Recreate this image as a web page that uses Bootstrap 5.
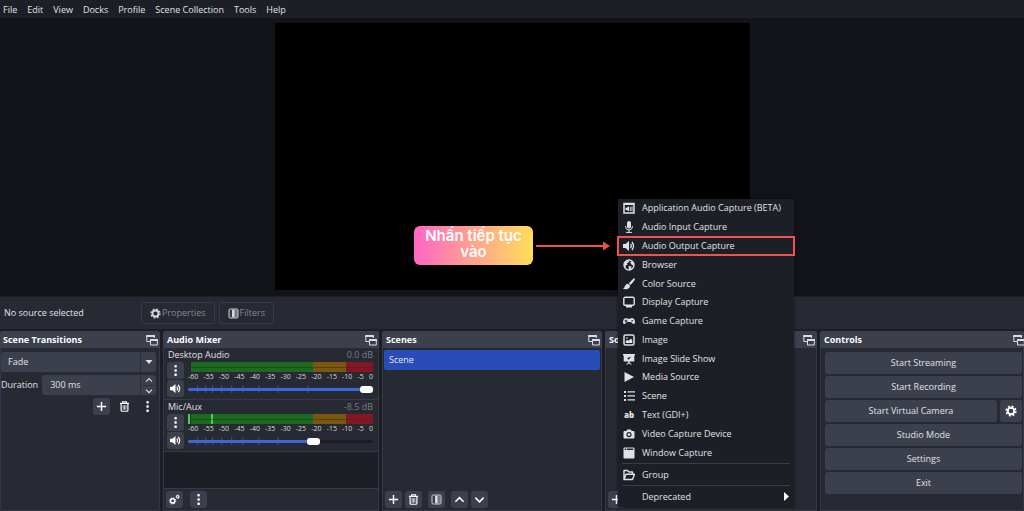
<!DOCTYPE html>
<html lang="en">
<head>
<meta charset="utf-8">
<meta name="viewport" content="width=device-width, initial-scale=1">
<title>OBS Studio</title>
<link href="https://cdn.jsdelivr.net/npm/bootstrap@5.3.0/dist/css/bootstrap.min.css" rel="stylesheet">
<style>
:root{--win:#1d1f26;--panel:#272a33;--raise:#3c404d;--line:#343744;--ink:#e0e1e5}
body{background:var(--win);color:var(--ink);font:9px/14px "Open Sans","Noto Sans",sans-serif;overflow:hidden}
svg{display:block;flex:none}
.ic{width:12px;height:12px;fill:currentColor}
button,input,select{font:inherit;color:inherit}
.menubar{height:18px;padding:1px 3px 0;gap:10px}
.menubar a{color:var(--ink);line-height:18px;text-decoration:none}
.stage{background:#131419;padding:5px 0 6px}
.screen{background:#000;width:475px;height:100%;margin-left:1px}
.tip{left:139px;top:203px;width:119px;height:39px;border:0;border-radius:6px;background:linear-gradient(90deg,#ff66c4,#ffde59);color:#fff;font:600 15px/16px Inter,sans-serif;padding:0 4px 3px}
.arrow{left:261px;top:217px}
.context{background:var(--panel);height:32px;padding:0 4px;margin-top:1px}
.context span{width:137px}
.ghost{height:22px;padding:0 8px;gap:1px;background:transparent;border:1px solid #373a47;border-radius:3px;color:#85878e}
.ghost .ic{color:#d5d6da;width:11px;height:11px}
.docks{display:grid;grid-template-columns:160fr 216fr 220fr 212fr 204fr;gap:3px;height:182px;padding-top:2px}
.dock{background:var(--panel);border:1px solid var(--line);border-radius:3px 3px 0 0;min-width:0}
.dock-head{background:var(--raise);height:17px;padding:0 3px 0 4px;margin:-1px -1px 0;border-radius:3px 3px 0 0}
.dock:first-child .dock-head{padding-left:3px}
.dock-head .ic{margin-right:-1px}
.dock h2{font-size:9px;font-weight:700;line-height:17px;margin:0;color:#fff}
.tool{width:17px;height:17px;padding:0;border:0;border-radius:3px;background:var(--raise);display:flex;align-items:center;justify-content:center;color:#fff;flex:none}
.tool .ic{width:11px;height:11px}
.plain{background:transparent}
.stack{display:flex;flex-direction:column;gap:3px;padding:4px 3px 0 0}
.field{background:var(--raise);border:0;border-radius:3px;height:20px;min-width:0}
select.field{appearance:none;padding:0 7px;width:100%}
.pick .cap{right:0;top:0;width:16px;height:20px;border-left:1px solid #2c2f39;pointer-events:none}
.spin{width:16px;border-left:1px solid #2c2f39}
.spin button{height:10px;width:15px;padding:0;border:0;background:transparent;display:flex;align-items:center;justify-content:center}
.spin button+button{border-top:1px solid #2c2f39}
.spin .ic{width:8px;height:8px}
.acts{gap:6px}
.strip{height:52px;padding:0 5px 0 3px;border-bottom:1px solid #363946}
.strip label{line-height:14px;padding-left:1px}
.db{color:#777a83;line-height:14px}
.side{width:17px;gap:1px}
.vu{height:10px;margin-left:3px;background:linear-gradient(90deg,#1a6b1f 67%,#7a560f 67% 85%,#861526 85%);position:relative}
.vu::after{content:"";position:absolute;left:0;right:0;top:5px;height:1px;background:#27301f80}
.live::before{content:"";position:absolute;left:-3px;top:0;bottom:0;width:25px;background:linear-gradient(90deg,#35dc45 2px,transparent 2px 23px,#35dc45 23px)}
.scale{font-size:7px;line-height:9px;color:#d8d9dc}
.fader{height:17px}
.fader svg{left:0;top:4px;width:100%;height:8px}
.fader input{appearance:none;-webkit-appearance:none;width:100%;height:17px;margin:0;background:transparent;display:block;position:relative}
.fader input::-webkit-slider-runnable-track{height:3px;border-radius:2px;background:linear-gradient(90deg,#3d66d8 var(--v),#1b1d24 var(--v))}
.fader input::-webkit-slider-thumb{-webkit-appearance:none;width:13px;height:7px;margin-top:-2px;border-radius:3px;background:#fff}
.empty{background:var(--win);border-bottom:1px solid #363946}
.foot{height:21px;padding:0 2px;gap:3px;align-items:center}
.foot.wide{gap:7px}
.foot .gapped{margin-right:3px}
.picked{background:#284cb8;border:0;border-radius:2px;height:20px;margin:2px 1px;padding:0 5px;line-height:20px;color:#e6e8f2}
.controls{display:grid;gap:2px;padding:4px 1px 0 4px}
.ctl{background:var(--raise);border:0;border-radius:3px;height:22px;padding:0;color:var(--ink)}
.cog{width:22px;margin-left:3px;display:flex;align-items:center;justify-content:center;color:#fff}
.popup{left:12px;bottom:3px;width:176px;background:var(--win);box-shadow:0 0 3px #0008;z-index:5}
.sources{height:263px;margin-bottom:1px}
.popup a{color:var(--ink);text-decoration:none;display:flex;align-items:center;gap:7px;padding:0 5px;flex:1 1 0;min-height:0;white-space:nowrap}
.popup hr{margin:0 4px;opacity:1;border-color:#3a3d48}
.popup .hot{outline:2px solid #f0524f;outline-offset:-1px}
.abc{font:800 8px/12px "Open Sans",sans-serif;text-align:center}
.popup .last{height:21px}
</style>
</head>
<body class="vh-100 d-flex flex-column">
<svg width="0" height="0" class="position-absolute" aria-hidden="true">
<symbol id="gear" viewBox="0 0 12 12"><circle cx="6" cy="6" r="3.3" fill="none" stroke="currentColor" stroke-width="2"/><circle cx="6" cy="6" r="4.9" fill="none" stroke="currentColor" stroke-width="1.4" stroke-dasharray="2 1.85"/></symbol>
<symbol id="filter" viewBox="0 0 12 12"><rect x="1" y="1" width="10" height="10" rx="1.5" fill="#777a83" stroke="#c4c6cb"/><path d="M2 2h3v8H2z" fill="#3a3d47"/><path d="M4.500 2h2.500v8H4.500z" fill="#e4e5e8"/></symbol>
<symbol id="float" viewBox="0 0 12 12"><path d="M5 7.5H.8v-6h7.500V4" fill="none" stroke="#dcdde0"/><path d="M.3 1h8.500v2H.3z" fill="#dcdde0"/><path d="M4.500 5.500h6.800v5.500H4.500z" fill="#3c404d" stroke="#dcdde0"/><path d="M4 5h7.800v2H4z" fill="#dcdde0"/></symbol>
<symbol id="dots" viewBox="0 0 12 12"><rect x="4.800" y="0" width="2.600" height="2.800" rx=".8"/><rect x="4.800" y="4.600" width="2.600" height="2.800" rx=".8"/><rect x="4.800" y="9.200" width="2.600" height="2.800" rx=".8"/></symbol>
<symbol id="plus" viewBox="0 0 12 12"><path d="M6 1v10M1 6h10" stroke="currentColor" stroke-width="1.600"/></symbol>
<symbol id="trash" viewBox="0 0 12 12"><path d="M1 2.500h10M4 2V.8h4V2M2.300 3v7.200q0 1 1 1h5.400q1 0 1-1V3" fill="none" stroke="currentColor" stroke-width="1.300"/><path d="M4.500 4.500v5M6 4.500v5M7.500 4.500v5" stroke="currentColor" stroke-width=".8"/></symbol>
<symbol id="up" viewBox="0 0 12 12"><path d="M1.500 8.500L6 4l4.500 4.500" fill="none" stroke="currentColor" stroke-width="1.700"/></symbol>
<symbol id="down" viewBox="0 0 12 12"><path d="M1.500 4L6 8.500 10.500 4" fill="none" stroke="currentColor" stroke-width="1.700"/></symbol>
<symbol id="caret" viewBox="0 0 12 12"><path d="M2.500 4h7L6 8z"/></symbol>
<symbol id="sound" viewBox="0 0 12 12"><path d="M0 4h2.500L6 1v10L2.500 8H0z"/><path d="M7.500 4q1.500 2 0 4M9 2q3 4 0 8" fill="none" stroke="currentColor" stroke-width="1.300"/></symbol>
<symbol id="gears" viewBox="0 0 12 12"><circle cx="4" cy="7.500" r="2.300" fill="none" stroke="currentColor" stroke-width="1.600"/><circle cx="4" cy="7.500" r="3.400" fill="none" stroke="currentColor" stroke-dasharray="1.300 1.370"/><circle cx="9.500" cy="3" r="1.300" fill="none" stroke="currentColor" stroke-width="1.100"/><circle cx="9.500" cy="3" r="2.100" fill="none" stroke="currentColor" stroke-width=".6" stroke-dasharray=".8 .85"/></symbol>
<symbol id="app" viewBox="0 0 12 12"><path d="M1 1.500h10v9.500H1z" fill="none" stroke="currentColor" stroke-width="1.500"/><path d="M1 1h10v2H1zM2.500 5.700h1.300L6 4v5.500L3.800 8H2.500z"/><path d="M7.300 5v4M9 4.300v5" stroke="currentColor" stroke-width="1"/></symbol>
<symbol id="mic" viewBox="0 0 12 12"><rect x="4" y="0" width="4" height="7.500" rx="2"/><path d="M2.500 5q0 4 3.500 4t3.500-4M6 9v2.500M3 11.400h6" fill="none" stroke="currentColor"/></symbol>
<symbol id="globe" viewBox="0 0 12 12"><circle cx="6" cy="6" r="5" fill="none" stroke="currentColor" stroke-width="1.400"/><path d="M1.500 4Q3 1 6.500 1.200L6 3 4 4.200 4.500 6 3 6 2.500 8.500 1 7zM7 3l3-.5 1 3-1 1-1.500-1zM5.500 7l3 .5-.5 3-2 .7z"/></symbol>
<symbol id="brush" viewBox="0 0 12 12"><path d="M11.800.3q.5.800-1 3L7.500 7 5.800 5.200 9.500 1.500q1.500-1.400 2.300-1.200zM5.200 5.800L7 7.600Q7 11 3.500 11.200 1.500 11.500 0 10.200q1.700-.4 2-2.200.8-2.200 3.200-2.200z"/></symbol>
<symbol id="monitor" viewBox="0 0 12 12"><rect x=".8" y="1.300" width="10.400" height="8" rx="1.300" fill="none" stroke="currentColor" stroke-width="1.400"/><path d="M3 10h6v1.500H3z"/></symbol>
<symbol id="pad" viewBox="0 0 12 12"><path fill-rule="evenodd" d="M3 3q1 0 1.500.8h3Q8 3 9 3q3 .3 3 4.500Q11.800 9 10.500 9 9 8.700 8 7H4Q3 8.700 1.500 9 .2 9 0 7.500 0 3.300 3 3zM2.500 4.500v1h-1v1h1v1h1v-1h1v-1h-1v-1zM8.500 5v1.500h1.300V5z"/></symbol>
<symbol id="image" viewBox="0 0 12 12"><rect x="1" y="1" width="10" height="10" rx="1.500" fill="none" stroke="currentColor" stroke-width="1.500"/><path d="M2.700 9V7.300l1.500-1.500 1.300 1L8 4.500l1.300 2V9z"/><circle cx="4" cy="4" r=".8"/></symbol>
<symbol id="slides" viewBox="0 0 12 12"><path fill-rule="evenodd" d="M0 1h12v1.500h-.7V8.500H6.700v1l2.300 2H7.500L6 10.300 4.500 11.500H3l2.300-2v-1H.7v-6H0zM4 5l1.500 1.800L8.500 3.500 6 4.500z"/></symbol>
<symbol id="play" viewBox="0 0 12 12"><path d="M1.500 1L11 6l-9.500 5z"/></symbol>
<symbol id="list" viewBox="0 0 12 12"><path d="M1 1h2v2H1zM1 5h2v2H1zM1 9h2v2H1zM4.500 1.300H12v1.300H4.500zM4.500 5.300H12v1.300H4.500zM4.500 9.300H12v1.300H4.500z"/></symbol>
<symbol id="camera" viewBox="0 0 12 12"><path fill-rule="evenodd" d="M1.500 3H3.300L4.300 1.500h3.400L8.700 3h1.800q1 0 1 1v5.500q0 1-1 1h-9q-1 0-1-1V4q0-1 1-1zM6 4a2.600 2.600 0 100 5.200A2.600 2.600 0 006 4z"/><circle cx="6" cy="6.600" r="1.400"/></symbol>
<symbol id="window" viewBox="0 0 12 12"><path fill-rule="evenodd" d="M.5 1.500q0-1 1-1h9q1 0 1 1v9q0 1-1 1h-9q-1 0-1-1zM1.700 1.600v1.400h1.300V1.600zM3.800 1.600v1.400h6.500V1.600z"/></symbol>
<symbol id="folder" viewBox="0 0 12 12"><path d="M1 10.500V1.500h3.500L6 3h3.500v2M1 10.500L3 5.300h8.500l-2 5.200z" fill="none" stroke="currentColor" stroke-width="1.400" stroke-linejoin="round"/></symbol>
<symbol id="marks" viewBox="0 0 184 8" preserveAspectRatio="none"><path d="M9.500 0v8M17.500 0v8M24.500 0v8M33.500 0v8M43.500 0v8M54.500 0v8M70.500 0v8M89.500 0v8M119.500 0v8" stroke="#50535f"/></symbol>
</svg>

<nav class="menubar d-flex align-items-center">
<a href="#">File</a><a href="#">Edit</a><a href="#">View</a><a href="#">Docks</a><a href="#">Profile</a><a href="#">Scene Collection</a><a href="#">Tools</a><a href="#">Help</a>
</nav>

<main class="stage flex-grow-1 d-flex justify-content-center">
<div class="screen position-relative">
<button class="tip position-absolute">Nhấn tiếp tục vào</button>
<svg class="arrow position-absolute" width="74" height="12" viewBox="0 0 74 12" fill="#f0524f"><path d="M0 5h68v2H0zM67 1.500L74 6l-7 4.500z"/></svg>
</div>
</main>

<div class="context d-flex align-items-center">
<span>No source selected</span>
<button class="ghost d-flex align-items-center me-1"><svg class="ic"><use href="#gear"/></svg>Properties</button>
<button class="ghost d-flex align-items-center"><svg class="ic"><use href="#filter"/></svg>Filters</button>
</div>

<div class="docks">
<section class="dock">
<div class="dock-head d-flex justify-content-between align-items-center"><h2>Scene Transitions</h2><svg class="ic"><use href="#float"/></svg></div>
<div class="stack">
<div class="pick position-relative">
<select class="field" aria-label="Transition"><option>Fade</option></select>
<span class="cap position-absolute d-flex align-items-center justify-content-center"><svg class="ic"><use href="#caret"/></svg></span>
</div>
<div class="d-flex align-items-center gap-1">
<label for="dur">Duration</label>
<div class="field d-flex flex-grow-1">
<input id="dur" class="bg-transparent border-0 flex-grow-1 w-50 ps-2" value="300 ms">
<div class="spin"><button aria-label="Increase"><svg class="ic"><use href="#up"/></svg></button><button aria-label="Decrease"><svg class="ic"><use href="#down"/></svg></button></div>
</div>
</div>
<div class="acts d-flex justify-content-end"><button class="tool" aria-label="Add"><svg class="ic"><use href="#plus"/></svg></button><button class="tool plain" aria-label="Remove"><svg class="ic"><use href="#trash"/></svg></button><button class="tool plain" aria-label="More"><svg class="ic"><use href="#dots"/></svg></button></div>
</div>
</section>

<section class="dock d-flex flex-column">
<div class="dock-head d-flex justify-content-between align-items-center"><h2>Audio Mixer</h2><svg class="ic"><use href="#float"/></svg></div>
<div class="strip">
<div class="d-flex justify-content-between"><label for="v1">Desktop Audio</label><span class="db">0.0 dB</span></div>
<div class="d-flex gap-1"><div class="side d-flex flex-column"><button class="tool" aria-label="Options"><svg class="ic"><use href="#dots"/></svg></button><button class="tool" aria-label="Mute"><svg class="ic"><use href="#sound"/></svg></button></div>
<div class="flex-grow-1"><div class="vu"></div><div class="scale d-flex justify-content-between"><span>-60</span><span>-55</span><span>-50</span><span>-45</span><span>-40</span><span>-35</span><span>-30</span><span>-25</span><span>-20</span><span>-15</span><span>-10</span><span>-5</span><span>0</span></div><div class="fader position-relative"><svg class="position-absolute"><use href="#marks"/></svg><input id="v1" type="range" value="100" style="--v:100%"></div></div></div>
</div>
<div class="strip">
<div class="d-flex justify-content-between"><label for="v2">Mic/Aux</label><span class="db">-8.5 dB</span></div>
<div class="d-flex gap-1"><div class="side d-flex flex-column"><button class="tool" aria-label="Options"><svg class="ic"><use href="#dots"/></svg></button><button class="tool" aria-label="Mute"><svg class="ic"><use href="#sound"/></svg></button></div>
<div class="flex-grow-1"><div class="vu live"></div><div class="scale d-flex justify-content-between"><span>-60</span><span>-55</span><span>-50</span><span>-45</span><span>-40</span><span>-35</span><span>-30</span><span>-25</span><span>-20</span><span>-15</span><span>-10</span><span>-5</span><span>0</span></div><div class="fader position-relative"><svg class="position-absolute"><use href="#marks"/></svg><input id="v2" type="range" value="69" style="--v:69%"></div></div></div>
</div>
<div class="empty flex-grow-1"></div>
<div class="foot wide d-flex"><button class="tool" aria-label="Audio settings"><svg class="ic"><use href="#gears"/></svg></button><button class="tool" aria-label="More"><svg class="ic"><use href="#dots"/></svg></button></div>
</section>

<section class="dock d-flex flex-column">
<div class="dock-head d-flex justify-content-between align-items-center"><h2>Scenes</h2><svg class="ic"><use href="#float"/></svg></div>
<div class="picked">Scene</div>
<div class="foot d-flex mt-auto"><button class="tool" aria-label="Add"><svg class="ic"><use href="#plus"/></svg></button><button class="tool gapped" aria-label="Remove"><svg class="ic"><use href="#trash"/></svg></button><button class="tool gapped" aria-label="Filters"><svg class="ic"><use href="#filter"/></svg></button><button class="tool" aria-label="Up"><svg class="ic"><use href="#up"/></svg></button><button class="tool" aria-label="Down"><svg class="ic"><use href="#down"/></svg></button></div>
</section>

<section class="dock d-flex flex-column position-relative">
<div class="dock-head d-flex justify-content-between align-items-center"><h2>Sources</h2><svg class="ic"><use href="#float"/></svg></div>
<div class="foot d-flex mt-auto"><button class="tool" aria-label="Add"><svg class="ic"><use href="#plus"/></svg></button></div>
<nav class="popup position-absolute">
<div class="sources d-flex flex-column">
<a href="#"><svg class="ic"><use href="#app"/></svg>Application Audio Capture (BETA)</a>
<a href="#"><svg class="ic"><use href="#mic"/></svg>Audio Input Capture</a>
<a href="#" class="hot"><svg class="ic"><use href="#sound"/></svg>Audio Output Capture</a>
<a href="#"><svg class="ic"><use href="#globe"/></svg>Browser</a>
<a href="#"><svg class="ic"><use href="#brush"/></svg>Color Source</a>
<a href="#"><svg class="ic"><use href="#monitor"/></svg>Display Capture</a>
<a href="#"><svg class="ic"><use href="#pad"/></svg>Game Capture</a>
<a href="#"><svg class="ic"><use href="#image"/></svg>Image</a>
<a href="#"><svg class="ic"><use href="#slides"/></svg>Image Slide Show</a>
<a href="#"><svg class="ic"><use href="#play"/></svg>Media Source</a>
<a href="#"><svg class="ic"><use href="#list"/></svg>Scene</a>
<a href="#"><span class="ic abc">ab</span>Text (GDI+)</a>
<a href="#"><svg class="ic"><use href="#camera"/></svg>Video Capture Device</a>
<a href="#"><svg class="ic"><use href="#window"/></svg>Window Capture</a>
</div>
<hr>
<a href="#" class="last"><svg class="ic"><use href="#folder"/></svg>Group</a>
<hr>
<a href="#" class="last"><span class="ic"></span>Deprecated<svg class="ms-auto" width="5" height="9" viewBox="0 0 5 9" fill="#fff"><path d="M0 0l5 4.500L0 9z"/></svg></a>
</nav>
</section>

<section class="dock">
<div class="dock-head d-flex justify-content-between align-items-center pe-0"><h2>Controls</h2><svg class="ic"><use href="#float"/></svg></div>
<div class="controls">
<button class="ctl">Start Streaming</button>
<button class="ctl">Start Recording</button>
<div class="d-flex"><button class="ctl flex-grow-1">Start Virtual Camera</button><button class="ctl cog" aria-label="Virtual camera settings"><svg class="ic"><use href="#gear"/></svg></button></div>
<button class="ctl">Studio Mode</button>
<button class="ctl">Settings</button>
<button class="ctl">Exit</button>
</div>
</section>
</div>
<script src="https://cdn.jsdelivr.net/npm/bootstrap@5.3.0/dist/js/bootstrap.bundle.min.js"></script>
</body>
</html>
